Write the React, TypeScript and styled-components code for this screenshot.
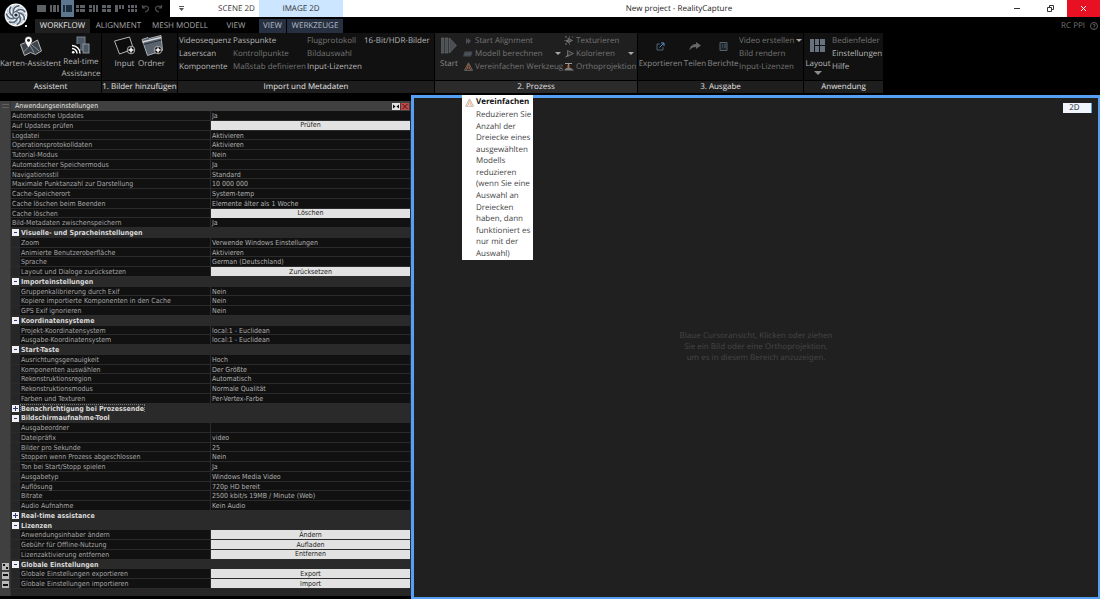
import React, { ReactNode } from 'react';
import styled, { createGlobalStyle, css } from 'styled-components';

const GlobalStyle = createGlobalStyle`
  * { box-sizing: border-box; }
  html, body, #root { height: 100%; margin: 0; }
  body {
    background: #000;
    color: #b8b8b8;
    font-family: 'Open Sans', 'Noto Sans', sans-serif;
    font-size: 8px;
    line-height: 12px;
    text-rendering: geometricPrecision;
    overflow: hidden;
  }
  button {
    font: inherit;
    color: inherit;
    background: none;
    border: 0;
    margin: 0;
    padding: 0;
    white-space: nowrap;
    text-rendering: inherit;
  }
`;

/* ---------- frame ---------- */

const Window = styled.div`
  display: flex;
  flex-direction: column;
  height: 100%;
`;

const Top = styled.header`
  display: grid;
  grid-template-columns: 35px 1fr;
`;

const LogoCell = styled.div`
  grid-row: span 2;
  padding: 3px 0 0 4px;
`;

const TitleBar = styled.div`
  display: flex;
  height: 17px;
  background: #fff;
  color: #333;
`;

const QuickAccess = styled.div`
  display: flex;
  width: 135px;
  background: #000;
`;

const QuickButton = styled.button<{ $active?: boolean }>`
  display: flex;
  align-items: center;
  justify-content: center;
  width: 13px;
  height: 17px;
  background: ${p => (p.$active ? '#5d7791' : 'transparent')};
`;

const MoreButton = styled.button`
  display: flex;
  align-items: center;
  justify-content: center;
  width: 22px;
`;

const ContextTab = styled.button<{ $active?: boolean }>`
  width: ${p => (p.$active ? 84 : 45)}px;
  margin-left: ${p => (p.$active ? 0 : 22)}px;
  background: ${p => (p.$active ? '#cce6ff' : 'transparent')};
`;

const Title = styled.h1`
  flex: 1;
  margin: 0;
  padding-left: 14px;
  font-size: 8px;
  font-weight: 400;
  line-height: 18px;
  text-align: center;
  color: #222;
`;

const WindowButton = styled.button<{ $close?: boolean }>`
  display: flex;
  align-items: center;
  justify-content: center;
  width: 33px;
  background: ${p => (p.$close ? '#e81123' : 'transparent')};
`;

const TabBar = styled.nav`
  display: flex;
  align-items: stretch;
  height: 15px;
  padding-top: 1px;
  background: #000;
`;

const Tab = styled.button<{ $w: number; $tone?: 'active' | 'context' }>`
  width: ${p => p.$w}px;
  line-height: 14px;
  color: #a8a8a8;
  ${p => p.$tone === 'active' && css`background: #202020; color: #e6e6e6;`}
  ${p => p.$tone === 'context' && css`background: #263040; color: #b4bcc6; margin-right: 1px;`}
`;

const License = styled.div`
  display: flex;
  align-items: center;
  gap: 5px;
  margin-left: auto;
  padding-right: 2px;
  color: #777;
`;

/* ---------- ribbon ---------- */

const Ribbon = styled.div`
  display: flex;
  gap: 1px;
  height: 60px;
`;

const Group = styled.section<{ $w: number; $raised?: boolean }>`
  display: grid;
  grid-template-rows: minmax(0, 1fr) 12px;
  gap: 1px;
  width: ${p => p.$w}px;
  --face: ${p => (p.$raised ? '#1f1f1f' : '#111')};
  --label: ${p => (p.$raised ? '#2b2b2b' : '#1e1e1e')};
`;

const GroupBody = styled.div`
  display: flex;
  background: var(--face);
  overflow: visible;
`;

const GroupLabel = styled.h2`
  margin: 0;
  background: var(--label);
  color: #e4e4e4;
  font-size: 8px;
  font-weight: 400;
  text-align: center;
  white-space: nowrap;
`;

const Tool = styled.button<{ $w: number; $dim?: boolean }>`
  display: flex;
  flex-direction: column;
  align-items: center;
  width: ${p => p.$w}px;
  padding-top: 1px;
  color: ${p => (p.$dim ? '#8c8c8c' : '#b8b8b8')};
  white-space: pre;
`;

const ToolIcon = styled.span`
  display: flex;
  align-items: center;
  justify-content: center;
  height: 24px;
`;

const Column = styled.div<{ $w: number }>`
  display: grid;
  grid-auto-rows: 13px;
  align-content: start;
  width: ${p => p.$w}px;
  padding-top: 1px;
`;

const Command = styled.button<{ $dim?: boolean }>`
  display: flex;
  align-items: center;
  gap: 2px;
  color: ${p => (p.$dim ? '#757575' : '#b8b8b8')};
  text-align: left;
`;

const CommandIcon = styled.span`
  display: flex;
  align-items: center;
  justify-content: center;
  flex: none;
  width: 10px;
`;

const Caret = styled.i<{ $push?: boolean }>`
  margin-left: ${p => (p.$push ? 'auto' : '0')};
  margin-right: 3px;
  border: solid transparent;
  border-width: 3px 3px 0;
  border-top-color: #a8a8a8;
`;

/* ---------- settings panel ---------- */

const Main = styled.main`
  display: flex;
  flex: 1;
  min-height: 0;
  margin-top: 2px;
`;

const Panel = styled.aside`
  display: grid;
  grid-template-columns: 11px minmax(0, 1fr);
  grid-template-rows: minmax(0, 1fr);
  width: 411px;
  flex: none;
  margin: 6px 0 3px;
  background: #262626;
  font-family: 'DejaVu Sans Condensed', 'DejaVu Sans', sans-serif;
  font-size: 7px;
  line-height: 8px;
  border-right: 1px solid #2c2c2c;
`;

const PanelEdge = styled.div`
  display: flex;
  flex-direction: column;
  justify-content: space-between;
  align-items: center;
  background: #404040;
  padding: 3px 0 8px;
  border-right: 1px solid #333;
`;

const DockIcons = styled.div`
  display: grid;
  gap: 2px;
`;

const PanelContent = styled.div`
  display: flex;
  flex-direction: column;
  padding-bottom: 7px;
`;

const PanelHeader = styled.header`
  display: flex;
  align-items: center;
  gap: 1px;
  flex: none;
  height: 10px;
  padding: 0 1px 0 4px;
  background: #404040;
  color: #e0e0e0;
`;

const PanelTitle = styled.h2`
  flex: 1;
  margin: 0;
  font-size: 7px;
  font-weight: 400;
`;

const IconButton = styled.button`
  display: flex;
`;

const Settings = styled.table`
  display: grid;
  grid-template-rows: minmax(0, 1fr);
  flex: 1;
  min-height: 0;
`;

const SettingsBody = styled.tbody`
  display: grid;
  grid-auto-rows: minmax(0, 1fr);
`;

const SettingRow = styled.tr`
  display: grid;
  grid-template-columns: 200px minmax(0, 1fr);
  background: #111;
  border-bottom: 1px solid #2b2b2b;
`;

const NameCell = styled.th<{ $indent?: boolean }>`
  display: flex;
  align-items: center;
  padding: 1px 0 0 ${p => (p.$indent ? 10 : 1)}px;
  border-right: 1px solid #2b2b2b;
  background: linear-gradient(to right, #262626 ${p => (p.$indent ? 9 : 0)}px, transparent 0);
  font-weight: 400;
  color: #a6a6a6;
  white-space: nowrap;
`;

const ValueCell = styled.td`
  display: flex;
  align-items: center;
  padding: 1px 0 0 1px;
  color: #b0b0b0;
  white-space: nowrap;
`;

const ActionCell = styled.td`
  display: flex;
  padding: 0;
`;

const ActionButton = styled.button`
  flex: 1;
  background: #e2e2e2;
  color: #222;
`;

const SectionRow = styled.tr`
  display: grid;
  background: #2a2a2a;
`;

const SectionCell = styled.th`
  display: flex;
  align-items: center;
  gap: 2px;
  padding: 0 0 0 1px;
  color: #d8d8d8;
  font-weight: 700;
  white-space: nowrap;
`;

const SectionName = styled.span<{ $focused?: boolean }>`
  outline: ${p => (p.$focused ? '1px dotted #777' : 'none')};
`;

const Toggle = styled.button`
  display: flex;
  width: 7px;
  height: 7px;
`;

/* ---------- viewport ---------- */

const Viewport = styled.section`
  position: relative;
  display: flex;
  align-items: center;
  justify-content: center;
  flex: 1;
  min-width: 0;
  border: solid #55a0f5;
  border-width: 3px 2px 2px 3px;
  background: #202020;
`;

const Hint = styled.p`
  width: 157px;
  margin: 0;
  padding-bottom: 2px;
  font-family: 'Noto Sans', sans-serif;
  line-height: 11px;
  text-align: center;
  color: #444;
`;

const ModeBadge = styled.button`
  position: absolute;
  top: 5px;
  right: 6px;
  width: 29px;
  height: 10px;
  padding-right: 5px;
  background: #f0f5ff;
  border-right: 1px solid #55a0f5;
  color: #222;
  line-height: 10px;
`;

const Tooltip = styled.div`
  position: absolute;
  top: -3px;
  left: 48px;
  display: grid;
  grid-template-columns: 14px 1fr;
  grid-template-rows: 14px minmax(0, 1fr);
  width: 71px;
  height: 165px;
  padding-bottom: 1px;
  background: #fff;
  color: #444;
`;

const TooltipIcon = styled.span`
  display: flex;
  align-items: center;
  justify-content: center;
`;

const TooltipTitle = styled.strong`
  color: #111;
  line-height: 14px;
`;

const TooltipText = styled.div`
  grid-column: 2;
  display: grid;
  grid-auto-rows: minmax(0, 1fr);
  align-items: center;
  line-height: 11px;
  white-space: nowrap;
`;

/* ---------- drawings ---------- */

const Logo = () => (
  <svg width="26" height="26" viewBox="0 0 26 26" role="img" aria-label="RealityCapture">
    <circle cx="12" cy="12" r="11.4" fill="#f2f4f6" />
    <g fill="none" strokeLinecap="round">
      {[0, 51, 103, 154, 206, 257, 308].map(a => (
        <g key={a} transform={`rotate(${a} 12 12)`}>
          <path d="M12 8.6C14.500 5.800 18.500 5.800 20.800 8.600" stroke="#53667a" strokeWidth="1.700" />
          <path d="M12.500 7C14.500 4.500 17 4.200 18.800 5" stroke="#a9b6c2" strokeWidth="0.900" />
        </g>
      ))}
    </g>
    <circle cx="12" cy="12" r="3.400" fill="#e8edf2" stroke="#33475a" strokeWidth="1" />
    <circle cx="12" cy="12" r="1.600" fill="#16222e" />
    <rect x="21" y="22" width="2" height="2" fill="#ddd" />
  </svg>
);

const layouts: number[][][] = [
  [[0, 0, 9, 7]],
  [[0, 0, 2, 7], [3, 0, 3, 7], [7, 0, 2, 7]],
  [[0, 0, 2, 7], [3, 0, 6, 7]],
  [[0, 0, 3, 3], [0, 4, 3, 3], [4, 0, 5, 3], [4, 4, 5, 3]],
  [[0, 0, 3, 3], [0, 4, 3, 3], [4, 0, 2, 7], [7, 0, 2, 7]],
  [[0, 0, 4, 3], [5, 0, 4, 3], [0, 4, 4, 3], [5, 4, 4, 3]],
  [[0, 0, 3, 7], [4, 0, 2, 4], [7, 0, 2, 4]],
  [[0, 0, 2, 3], [3, 0, 3, 3], [7, 0, 2, 3], [0, 4, 2, 3], [3, 4, 3, 3], [7, 4, 2, 3]],
];

const LayoutGlyph = ({ cells, dark }: { cells: number[][]; dark?: boolean }) => (
  <svg width="9" height="7" shapeRendering="crispEdges" aria-hidden>
    {cells.map(([x, y, w, h], i) => (
      <rect key={i} x={x} y={y} width={w} height={h} fill={dark ? '#1d2b3a' : '#5c6065'} />
    ))}
  </svg>
);

const UndoGlyph = ({ flip }: { flip?: boolean }) => (
  <svg width="9" height="9" viewBox="0 0 9 9" fill="none" stroke="#4c4c4c" strokeWidth="1.200" aria-hidden>
    <g transform={flip ? 'matrix(-1 0 0 1 9 0)' : undefined}>
      <path d="M1.500 1v3h3M1.500 4C3 1.500 7.500 1.500 7.500 4.800C7.500 6.500 6 7.500 4 8" />
    </g>
  </svg>
);

const MapGlyph = () => (
  <svg width="24" height="22" viewBox="0 0 24 22" aria-hidden>
    <path d="M1.500 9.500l5-2 5 1.500 7-4 4 11-6 3.500-5-2-6 3z" fill="#3c434a" stroke="#b5b5b5" />
    <path d="M4 17.500l7-7 4 7M12 9l8 7" fill="none" stroke="#8b949c" />
    <path d="M9.500 13C7 9 5.800 7.500 5.800 5.200a3.700 3.700 0 0 1 7.400 0C13.200 7.500 12 9 9.500 13z" fill="#fff" stroke="#111" strokeWidth="0.500" />
    <circle cx="9.500" cy="5.200" r="1.500" fill="#222" />
  </svg>
);

const RealtimeGlyph = () => (
  <svg width="20" height="20" viewBox="0 0 20 20" aria-hidden>
    <rect x="6" y="2" width="8" height="13" fill="#4c5764" stroke="#77828d" />
    <rect x="12" y="9" width="6" height="9" fill="#4c5764" stroke="#8b949c" />
    <path d="M0 9h9v10H0z" fill="#111" />
    <g fill="none" stroke="#fff" strokeWidth="1.500">
      <path d="M1 10.500a8 8 0 0 1 8 8M1 13.500a5 5 0 0 1 5 5" />
    </g>
    <circle cx="2.200" cy="17.300" r="1.300" fill="#fff" />
  </svg>
);

const Plus = () => (
  <g>
    <circle cx="18" cy="15" r="3.800" fill="#111" stroke="#ccc" strokeWidth="0.800" />
    <path d="M18 12.500v5M15.500 15h5" stroke="#fff" strokeWidth="1.500" />
  </g>
);

const InputGlyph = () => (
  <svg width="24" height="22" viewBox="0 0 24 22" aria-hidden>
    <path d="M1.500 6l15-4 4 12-14 5z" fill="#0c0c0c" stroke="#b5b5b5" />
    <Plus />
  </svg>
);

const FolderGlyph = () => (
  <svg width="24" height="22" viewBox="0 0 24 22" aria-hidden>
    <path d="M2 4.500l6-2 1 1 12-3 1.500 15-15 5z" fill="#5a646f" stroke="#a8afb5" />
    <path d="M2.500 7l18.500-4.500" stroke="#d5dade" strokeWidth="1.500" />
    <path d="M3.500 9.500l18-4.500" stroke="#2a3036" />
    <Plus />
  </svg>
);

const StartGlyph = () => (
  <svg width="18" height="18" viewBox="0 0 18 18" fill="#4a4f54" stroke="#6a6e72" strokeWidth="0.600" aria-hidden>
    <rect x="1.500" y="1" width="2.500" height="15" />
    <rect x="5.500" y="1" width="2.500" height="15" />
    <path d="M9.500 1l7 7.500-7 7.500z" />
  </svg>
);

const AlignGlyph = () => (
  <svg width="8" height="8" aria-hidden>
    <path d="M2 1v6l3-3zM4 1v6l3-3z" fill="#4b4f53" />
  </svg>
);

const ModelGlyph = () => (
  <svg width="10" height="8" aria-hidden>
    <path d="M1.500 1.500h8l-1.500 5H0z" fill="#42474c" />
    <path d="M4 1.500l-1 5M7 1.500l-1 5M1 4h8" stroke="#5c6166" strokeWidth="0.500" />
  </svg>
);

const SimplifyGlyph = ({ light }: { light?: boolean }) => (
  <svg width="9" height="9" viewBox="0 0 9 9" aria-hidden>
    <path d="M4.500 0.800L8.500 8.300H0.500z" fill="none" stroke={light ? '#aaa' : '#7a7a7a'} strokeWidth="0.800" />
    <path d="M4.500 2.500L2.500 8M4.500 2.500L6.500 8M3 6h3" stroke={light ? '#e9a676' : '#b9683a'} fill="none" strokeWidth="0.800" />
  </svg>
);

const TextureGlyph = () => (
  <svg width="10" height="9" aria-hidden>
    <path d="M1 1h2M5 1h1M8 1h1M1 4v1M1 8h2M5 8h1" stroke="#777" />
    <path d="M4 2l4.500 2.500L4 7z" fill="#555" stroke="#888" strokeWidth="0.600" />
    <circle cx="3" cy="5" r="1" fill="#888" />
  </svg>
);

const ColorGlyph = () => (
  <svg width="9" height="9" aria-hidden>
    <path d="M2.500 1.500l6 3-6 3z" fill="#32363a" stroke="#777" strokeWidth="0.800" />
    <path d="M0.500 8l3-2" stroke="#888" />
  </svg>
);

const OrthoGlyph = () => (
  <svg width="10" height="9" aria-hidden>
    <path d="M1 1.500h7M4.500 1.500v5" stroke="#999" />
    <path d="M3.500 3h2v3h-2z" fill="#c0683a" />
    <path d="M0 8.500l2-2.500h5l3 2.500z" fill="#7c7c7c" />
  </svg>
);

const ExportGlyph = () => (
  <svg width="9" height="9" fill="none" aria-hidden>
    <path d="M4 2H1v6h6V5" stroke="#4d6378" />
    <path d="M3.500 5.500L8 1M5 1h3v3" stroke="#5c8fc4" />
  </svg>
);

const ShareGlyph = () => (
  <svg width="12" height="9" aria-hidden>
    <path d="M7 0l5 3.500L7 7V5C4 5 2 6 0.500 8.500C0.800 4.500 3 2.300 7 2z" fill="#666" />
  </svg>
);

const ReportGlyph = () => (
  <svg width="9" height="9" aria-hidden>
    <path d="M1 0.500h7v8H1z" fill="#1c242c" stroke="#55606a" />
    <path d="M3 3h1M3 5h1M5 3h2M5 5h2" stroke="#5a6570" />
  </svg>
);

const PanesGlyph = () => (
  <svg width="16" height="14" shapeRendering="crispEdges" fill="#66727d" aria-hidden>
    <path d="M0 0h4v13H0zM5 0h4v6H5zM10 0h5v6h-5zM5 7h4v6H5zM10 7h5v6h-5z" />
  </svg>
);

const PlusMinus = ({ open }: { open: boolean }) => (
  <svg width="7" height="7" shapeRendering="crispEdges" aria-hidden>
    <rect width="7" height="7" fill="#f0f0f4" />
    <path d={open ? 'M2 3h3v1H2z' : 'M1 3h5v1H1zM3 1h1v5H3z'} fill="#303a70" />
  </svg>
);

/* ---------- data ---------- */

type Entry = { name: string; value?: string; action?: string };
type Section = { title?: string; closed?: boolean; focused?: boolean; rows: Entry[] };

const v = (name: string, value: string): Entry => ({ name, value });
const a = (name: string, action: string): Entry => ({ name, action });

const sections: Section[] = [
  {
    rows: [
      v('Automatische Updates', 'Ja'),
      a('Auf Updates prüfen', 'Prüfen'),
      v('Logdatei', 'Aktivieren'),
      v('Operationsprotokolldaten', 'Aktivieren'),
      v('Tutorial-Modus', 'Nein'),
      v('Automatischer Speichermodus', 'Ja'),
      v('Navigationsstil', 'Standard'),
      v('Maximale Punktanzahl zur Darstellung', '10 000 000'),
      v('Cache-Speicherort', 'System-temp'),
      v('Cache löschen beim Beenden', 'Elemente älter als 1 Woche'),
      a('Cache löschen', 'Löschen'),
      v('Bild-Metadaten zwischenspeichern', 'Ja'),
    ],
  },
  {
    title: 'Visuelle- und Spracheinstellungen',
    rows: [
      v('Zoom', 'Verwende Windows Einstellungen'),
      v('Animierte Benutzeroberfläche', 'Aktivieren'),
      v('Sprache', 'German (Deutschland)'),
      a('Layout und Dialoge zurücksetzen', 'Zurücksetzen'),
    ],
  },
  {
    title: 'Importeinstellungen',
    rows: [
      v('Gruppenkalibrierung durch Exif', 'Nein'),
      v('Kopiere importierte Komponenten in den Cache', 'Nein'),
      v('GPS Exif ignorieren', 'Nein'),
    ],
  },
  {
    title: 'Koordinatensysteme',
    rows: [
      v('Projekt-Koordinatensystem', 'local:1 - Euclidean'),
      v('Ausgabe-Koordinatensystem', 'local:1 - Euclidean'),
    ],
  },
  {
    title: 'Start-Taste',
    rows: [
      v('Ausrichtungsgenauigkeit', 'Hoch'),
      v('Komponenten auswählen', 'Der Größte'),
      v('Rekonstruktionsregion', 'Automatisch'),
      v('Rekonstruktionsmodus', 'Normale Qualität'),
      v('Farben und Texturen', 'Per-Vertex-Farbe'),
    ],
  },
  { title: 'Benachrichtigung bei Prozessende', closed: true, focused: true, rows: [] },
  {
    title: 'Bildschirmaufnahme-Tool',
    rows: [
      v('Ausgabeordner', ''),
      v('Dateipräfix', 'video'),
      v('Bilder pro Sekunde', '25'),
      v('Stoppen wenn Prozess abgeschlossen', 'Nein'),
      v('Ton bei Start/Stopp spielen', 'Ja'),
      v('Ausgabetyp', 'Windows Media Video'),
      v('Auflösung', '720p HD bereit'),
      v('Bitrate', '2500 kbit/s 19MB / Minute (Web)'),
      v('Audio Aufnahme', 'Kein Audio'),
    ],
  },
  { title: 'Real-time assistance', closed: true, rows: [] },
  {
    title: 'Lizenzen',
    rows: [
      a('Anwendungsinhaber ändern', 'Ändern'),
      a('Gebühr für Offline-Nutzung', 'Aufladen'),
      a('Lizenzaktivierung entfernen', 'Entfernen'),
    ],
  },
  {
    title: 'Globale Einstellungen',
    rows: [
      a('Globale Einstellungen exportieren', 'Export'),
      a('Globale Einstellungen importieren', 'Import'),
    ],
  },
];

const tooltipLines = [
  'Reduzieren Sie', 'Anzahl der', 'Dreiecke eines', 'ausgewählten', 'Modells', 'reduzieren',
  '(wenn Sie eine', 'Auswahl an', 'Dreiecken', 'haben, dann', 'funktioniert es', 'nur mit der', 'Auswahl)',
];

/* ---------- composed parts ---------- */

const RibbonGroup = ({ label, w, raised, children }: { label: string; w: number; raised?: boolean; children: ReactNode }) => (
  <Group $w={w} $raised={raised}>
    <GroupBody>{children}</GroupBody>
    <GroupLabel>{label}</GroupLabel>
  </Group>
);

const BigTool = ({ w, icon, label, dim, caret }: { w: number; icon: ReactNode; label: string; dim?: boolean; caret?: boolean }) => (
  <Tool $w={w} $dim={dim}>
    <ToolIcon>{icon}</ToolIcon>
    {label}
    {caret && <svg width="8" height="6" aria-hidden><path d="M0 1h8L4 5z" fill="#8c8c8c" /></svg>}
  </Tool>
);

const DockGlyph = ({ d }: { d: string }) => (
  <svg width="7" height="7" shapeRendering="crispEdges" aria-hidden>
    <rect width="7" height="7" fill="#b8b8b8" />
    <path d={d} fill="#111" />
  </svg>
);

const SettingsTable = () => (
  <Settings>
    <SettingsBody>
      {sections.map((s, i) => (
        <React.Fragment key={i}>
          {s.title && (
            <SectionRow>
              <SectionCell scope="rowgroup">
                <Toggle aria-label={s.title} aria-expanded={!s.closed}><PlusMinus open={!s.closed} /></Toggle>
                <SectionName $focused={s.focused}>{s.title}</SectionName>
              </SectionCell>
            </SectionRow>
          )}
          {s.rows.map(r => (
            <SettingRow key={r.name}>
              <NameCell scope="row" $indent={!!s.title}>{r.name}</NameCell>
              {r.action
                ? <ActionCell><ActionButton>{r.action}</ActionButton></ActionCell>
                : <ValueCell>{r.value}</ValueCell>}
            </SettingRow>
          ))}
        </React.Fragment>
      ))}
    </SettingsBody>
  </Settings>
);

export default function App() {
  return (
    <Window>
      <GlobalStyle />
      <Top>
        <LogoCell><Logo /></LogoCell>
        <TitleBar>
          <QuickAccess>
            {layouts.map((cells, i) => (
              <QuickButton key={i} $active={i === 2} aria-label={`Layout ${i + 1}`}>
                <LayoutGlyph cells={cells} dark={i === 2} />
              </QuickButton>
            ))}
            <QuickButton aria-label="Undo"><UndoGlyph /></QuickButton>
            <QuickButton aria-label="Redo"><UndoGlyph flip /></QuickButton>
          </QuickAccess>
          <MoreButton aria-label="Mehr">
            <svg width="5" height="6" aria-hidden><path d="M0 0h5v1H0zM0 2h5L2.500 5z" fill="#555" /></svg>
          </MoreButton>
          <ContextTab>SCENE 2D</ContextTab>
          <ContextTab $active>IMAGE 2D</ContextTab>
          <Title>New project - RealityCapture</Title>
          <WindowButton aria-label="Minimieren">
            <svg width="7" height="7" aria-hidden><path d="M0 3h6v1H0z" fill="#333" /></svg>
          </WindowButton>
          <WindowButton aria-label="Wiederherstellen">
            <svg width="7" height="7" fill="none" stroke="#333" aria-hidden><path d="M0.500 2.500h4v4h-4zM2.500 2V0.500h4v4H5" /></svg>
          </WindowButton>
          <WindowButton $close aria-label="Schließen">
            <svg width="7" height="7" stroke="#fff" aria-hidden><path d="M1 1l5 5M6 1L1 6" /></svg>
          </WindowButton>
        </TitleBar>
        <TabBar>
          <Tab $w={55} $tone="active">WORKFLOW</Tab>
          <Tab $w={57}>ALIGNMENT</Tab>
          <Tab $w={66}>MESH MODELL</Tab>
          <Tab $w={46}>VIEW</Tab>
          <Tab $w={27} $tone="context">VIEW</Tab>
          <Tab $w={56} $tone="context">WERKZEUGE</Tab>
          <License>
            RC PPI
            <svg width="8" height="8" fill="none" stroke="#777" strokeWidth="0.800" aria-label="Hilfe">
              <circle cx="4" cy="4" r="3.500" />
              <path d="M3 3.300C3 1.800 5.200 2 5.200 3.200C5.200 4 4 4 4 5M4 5.600v0.800" />
            </svg>
          </License>
        </TabBar>
      </Top>

      <Ribbon>
        <RibbonGroup label="Assistent" w={101}>
          <BigTool w={61} icon={<MapGlyph />} label="Karten-Assistent" />
          <BigTool w={40} icon={<RealtimeGlyph />} label={'Real-time\nAssistance'} />
        </RibbonGroup>
        <RibbonGroup label="1. Bilder hinzufügen" w={75}>
          <Column $w={9} />
          <BigTool w={27} icon={<InputGlyph />} label="Input" />
          <BigTool w={27} icon={<FolderGlyph />} label="Ordner" />
        </RibbonGroup>
        <RibbonGroup label="Import und Metadaten" w={256}>
          <Column $w={1} />
          <Column $w={54}>
            <Command>Videosequenz</Command>
            <Command>Laserscan</Command>
            <Command>Komponente</Command>
          </Column>
          <Column $w={74}>
            <Command>Passpunkte</Command>
            <Command $dim>Kontrollpunkte</Command>
            <Command $dim>Maßstab definieren</Command>
          </Column>
          <Column $w={57}>
            <Command $dim>Flugprotokoll</Command>
            <Command $dim>Bildauswahl</Command>
            <Command>Input-Lizenzen</Command>
          </Column>
          <Column $w={68}>
            <Command>16-Bit/HDR-Bilder</Command>
          </Column>
        </RibbonGroup>
        <RibbonGroup label="2. Prozess" w={202} raised>
          <BigTool w={28} dim icon={<StartGlyph />} label="Start" />
          <Column $w={101}>
            <Command $dim><CommandIcon><AlignGlyph /></CommandIcon>Start Alignment</Command>
            <Command $dim><CommandIcon><ModelGlyph /></CommandIcon>Modell berechnen<Caret $push /></Command>
            <Command $dim><CommandIcon><SimplifyGlyph /></CommandIcon>Vereinfachen Werkzeug</Command>
          </Column>
          <Column $w={73}>
            <Command $dim><CommandIcon><TextureGlyph /></CommandIcon>Texturieren</Command>
            <Command $dim><CommandIcon><ColorGlyph /></CommandIcon>Kolorieren<Caret $push /></Command>
            <Command $dim><CommandIcon><OrthoGlyph /></CommandIcon>Orthoprojektion</Command>
          </Column>
        </RibbonGroup>
        <RibbonGroup label="3. Ausgabe" w={165}>
          <BigTool w={45} dim icon={<ExportGlyph />} label="Exportieren" />
          <BigTool w={24} dim icon={<ShareGlyph />} label="Teilen" />
          <BigTool w={32} dim icon={<ReportGlyph />} label="Berichte" />
          <Column $w={64}>
            <Command $dim>Video erstellen<Caret /></Command>
            <Command $dim>Bild rendern</Command>
            <Command $dim>Input-Lizenzen</Command>
          </Column>
        </RibbonGroup>
        <RibbonGroup label="Anwendung" w={79}>
          <BigTool w={28} icon={<PanesGlyph />} label="Layout" caret />
          <Column $w={51}>
            <Command $dim>Bedienfelder</Command>
            <Command>Einstellungen</Command>
            <Command>Hilfe</Command>
          </Column>
        </RibbonGroup>
      </Ribbon>

      <Main>
        <Panel>
          <PanelEdge>
            <svg width="7" height="5" shapeRendering="crispEdges" aria-hidden><path d="M0 0h7v1H0zM0 3h7v1H0z" fill="#606060" /></svg>
            <DockIcons>
              <DockGlyph d="M1 1h2v2H1zM4 4h2v2H4z" />
              <DockGlyph d="M1 2h5v2H1z" />
              <DockGlyph d="M1 3h5v2H1z" />
            </DockIcons>
          </PanelEdge>
          <PanelContent>
            <PanelHeader>
              <PanelTitle>Anwendungseinstellungen</PanelTitle>
              <IconButton aria-label="Andocken">
                <svg width="8" height="7" aria-hidden><rect width="8" height="7" fill="#e4e4e4" /><path d="M1 1.500L3.500 3.500 1 5.500zM7 1.500L4.500 3.500 7 5.500z" fill="#111" /></svg>
              </IconButton>
              <IconButton aria-label="Schließen">
                <svg width="8" height="7" aria-hidden><rect width="8" height="7" fill="#c04848" /><path d="M1.500 1l5 5M6.500 1l-5 5" stroke="#501010" /></svg>
              </IconButton>
            </PanelHeader>
            <SettingsTable />
          </PanelContent>
        </Panel>

        <Viewport>
          <Hint>Blaue Cursoransicht, Klicken oder ziehen Sie ein Bild oder eine Orthoprojektion, um es in diesem Bereich anzuzeigen.</Hint>
          <ModeBadge>2D</ModeBadge>
          <Tooltip role="tooltip">
            <TooltipIcon><SimplifyGlyph light /></TooltipIcon>
            <TooltipTitle>Vereinfachen</TooltipTitle>
            <TooltipText>
              {tooltipLines.map(line => <span key={line}>{line} </span>)}
            </TooltipText>
          </Tooltip>
        </Viewport>
      </Main>
    </Window>
  );
}
